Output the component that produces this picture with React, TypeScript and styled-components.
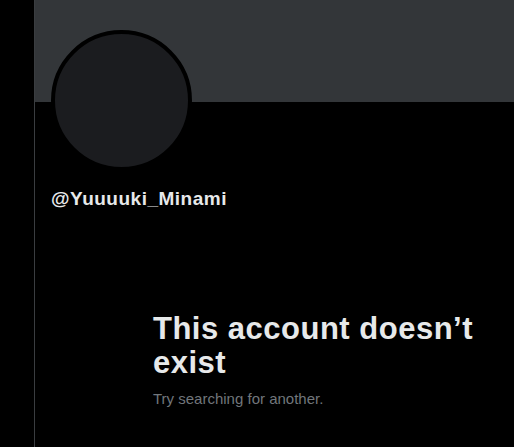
import React from "react";
import styled, { createGlobalStyle } from "styled-components";

const Global = createGlobalStyle`
  html, body { margin: 0; padding: 0; background: #000; }
  body { font-family: "Liberation Sans", Arial, sans-serif; color: #e7e9ea; }
  * { box-sizing: border-box; }
`;

const Page = styled.div`
  display: flex;
  width: 514px;
  height: 447px;
  background: #000;
  overflow: hidden;
`;

const SideRail = styled.div`
  width: 35px;
  flex: none;
  border-right: 1px solid #3a3d40;
`;

const Main = styled.main`
  flex: 1;
  display: flex;
  flex-direction: column;
`;

const Banner = styled.div`
  height: 102px;
  background: #333639;
`;

const ProfileHead = styled.div`
  padding: 0 16px;
  display: flex;
  flex-direction: column;
`;

const Avatar = styled.div`
  width: 141px;
  height: 141px;
  margin-top: -72px;
  border-radius: 50%;
  border: 4px solid #000;
  background: #1b1c1f;
`;

const Handle = styled.div`
  margin-top: 16px;
  font-size: 19px;
  line-height: 24px;
  font-weight: 700;
  letter-spacing: 0.5px;
  color: #e7e9ea;
`;

const Empty = styled.section`
  margin-top: 101px;
  padding-left: 118px;
  padding-right: 20px;
`;

const Title = styled.h2`
  margin: 0;
  font-size: 31px;
  line-height: 34px;
  font-weight: 700;
  color: #e7e9ea;
  letter-spacing: 0.5px;
`;

const Sub = styled.p`
  margin: 9px 0 0;
  font-size: 15px;
  line-height: 20px;
  color: #71767b;
`;

export default function App() {
  return (
    <>
      <Global />
      <Page>
        <SideRail />
        <Main>
          <Banner />
          <ProfileHead>
            <Avatar />
            <Handle>@Yuuuuki_Minami</Handle>
          </ProfileHead>
          <Empty>
            <Title>This account doesn’t exist</Title>
            <Sub>Try searching for another.</Sub>
          </Empty>
        </Main>
      </Page>
    </>
  );
}
